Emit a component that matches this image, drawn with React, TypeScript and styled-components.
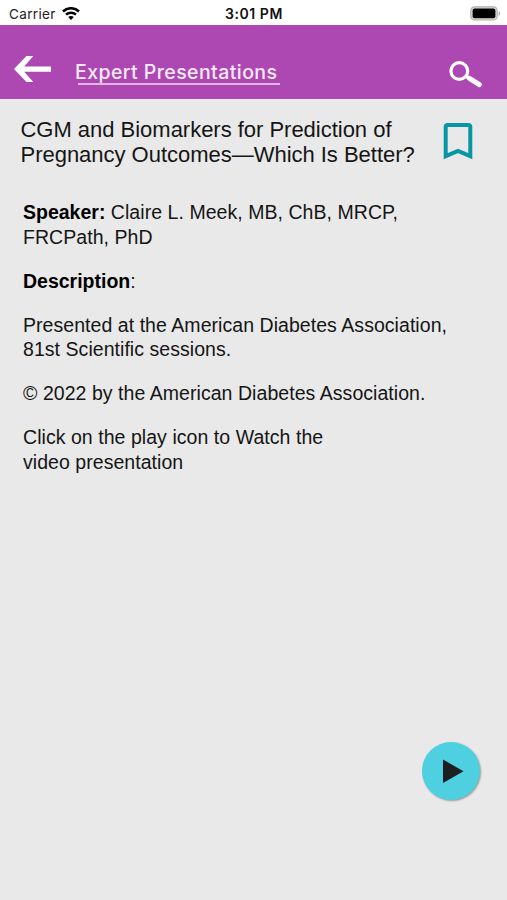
import React from 'react';
import styled, { createGlobalStyle } from 'styled-components';

const GlobalStyle = createGlobalStyle`
  * { box-sizing: border-box; }
  body { margin: 0; background: #e9e9e9; }
  button { padding: 0; border: 0; background: none; display: block; }
  svg { display: block; }
`;

const Screen = styled.div`
  display: flex;
  flex-direction: column;
  height: 900px;
  width: 507px;
  overflow: hidden;
  background: #e9e9e9;
  color: #151515;
  font-family: 'Liberation Sans', Arial, sans-serif;
`;

const StatusBar = styled.div`
  display: grid;
  grid-template-columns: 1fr auto 1fr;
  align-items: center;
  height: 25px;
  padding: 2px 6px 0 9px;
  background: #fff;
  font-family: Inter, sans-serif;
  font-size: 13.5px;
  line-height: 22px;
  color: #222;
`;

const Carrier = styled.div`
  display: flex;
  align-items: center;
  gap: 6px;
  letter-spacing: 0.35px;
`;

const Clock = styled.div`
  margin-left: -2px;
  font-size: 14px;
  font-weight: 600;
  color: #111;
  letter-spacing: 0.55px;
`;

const Battery = styled.div`
  justify-self: end;
`;

const Header = styled.header`
  display: flex;
  align-items: flex-start;
  height: 74px;
  padding: 30px 23px 0 14px;
  background: #ad48b2;
`;

const HeaderTitle = styled.h1`
  margin: 5px auto 0 24px;
  font-family: Inter, sans-serif;
  font-size: 19.5px;
  font-weight: 500;
  line-height: 24px;
  letter-spacing: 0.42px;
  color: #fbeafc;
  white-space: nowrap;
`;

const TitleText = styled.span`
  display: block;
  height: 23px;
`;

const Underline = styled.div`
  height: 2px;
  width: 202px;
  margin-left: 3px;
  background: #e2b5e5;
`;

const SearchButton = styled.button`
  margin-top: 5px;
`;

const Main = styled.main`
  padding: 19px 34px 0 21px;
`;

const TitleRow = styled.div`
  display: flex;
  justify-content: space-between;
  align-items: flex-start;
`;

const Title = styled.h2`
  margin: 0 0 0 -0.5px;
  font-size: 22px;
  font-weight: 400;
  line-height: 24.5px;
  letter-spacing: -0.02px;
  white-space: nowrap;
`;

const BookmarkButton = styled.button`
  margin-top: 5px;
`;

const Details = styled.section`
  padding: 33px 0 0 2px;
  font-size: 19.5px;
  line-height: 24.5px;
  letter-spacing: 0.05px;
  white-space: nowrap;
`;

const Paragraph = styled.p`
  margin: 0 0 19.5px;
`;

const Strong = styled.strong`
  color: #000;
  letter-spacing: 0;
`;

const PlayButton = styled.button`
  display: grid;
  place-items: center;
  width: 58px;
  height: 58px;
  margin: auto 27px 100px auto;
  border-radius: 50%;
  background: #4fd0e1;
  box-shadow: 1px 1px 2px rgba(0, 0, 0, 0.35);
`;

export default function App() {
  return (
    <Screen>
      <GlobalStyle />
      <StatusBar>
        <Carrier>
          <span>Carrier</span>
          <svg width="18" height="14" viewBox="0 0 18 14" fill="none" stroke="#050505" strokeWidth="2.5">
            <path d="M1 4.5C5.5 .1 12.5 .1 17 4.5" />
            <path d="M4 7.7c2.8-2.7 7.2-2.7 10 0" />
            <path d="M6.2 10.1c1.5-1.6 4.1-1.6 5.6 0L9 12.9z" fill="#050505" stroke="none" />
          </svg>
        </Carrier>
        <Clock>3:01 PM</Clock>
        <Battery>
          <svg width="31" height="15" viewBox="0 0 31 15">
            <rect x=".8" y=".8" width="26.4" height="13.2" rx="3.8" fill="#ddd" stroke="#b0b0b0" strokeWidth="1.2" />
            <rect x="2.6" y="2.6" width="22.8" height="9.6" rx="1.8" fill="#000" />
            <path d="M28.6 5.2c2 .5 2 4 0 4.5z" fill="#aaa" />
          </svg>
        </Battery>
      </StatusBar>
      <Header>
        <button aria-label="Back">
          <svg width="37" height="28" viewBox="0 0 37 28" fill="#fff">
            <path d="M0 14L12.5 1H19.3L10.2 11.5H37v5.2H10.2L19.3 27H12.5z" />
          </svg>
        </button>
        <HeaderTitle>
          <TitleText>Expert Presentations</TitleText>
          <Underline />
        </HeaderTitle>
        <SearchButton aria-label="Search">
          <svg width="35" height="29" viewBox="0 0 35 29" fill="none" stroke="#fff">
            <circle cx="10.3" cy="11" r="8.4" strokeWidth="3.2" />
            <path d="M16.5 16l4 2.5" strokeWidth="3.5" />
            <path d="M20.5 18.4l9.8 6.3" strokeWidth="5" strokeLinecap="round" />
          </svg>
        </SearchButton>
      </Header>
      <Main>
        <TitleRow>
          <Title>
            CGM and Biomarkers for Prediction of
            <br />
            Pregnancy Outcomes—Which Is Better?
          </Title>
          <BookmarkButton aria-label="Bookmark">
            <svg width="30" height="38" viewBox="0 0 30 38" fill="none" stroke="#0895a4" strokeWidth="4">
              <path d="M2.7 33.2V4q0-2 2-2h20.6q2 0 2 2v29.2L15 28z" />
            </svg>
          </BookmarkButton>
        </TitleRow>
        <Details>
          <Paragraph>
            <Strong>Speaker:</Strong> Claire L. Meek, MB, ChB, MRCP,
            <br />
            FRCPath, PhD
          </Paragraph>
          <Paragraph>
            <Strong>Description</Strong>:
          </Paragraph>
          <Paragraph>
            Presented at the American Diabetes Association,
            <br />
            81st Scientific sessions.
          </Paragraph>
          <Paragraph>© 2022 by the American Diabetes Association.</Paragraph>
          <Paragraph>
            Click on the play icon to Watch the
            <br />
            video presentation
          </Paragraph>
        </Details>
      </Main>
      <PlayButton aria-label="Play">
        <svg width="58" height="58" viewBox="0 0 58 58">
          <path d="M21 17.5v23.5L41.5 29.3z" fill="#1b1f20" />
        </svg>
      </PlayButton>
    </Screen>
  );
}
